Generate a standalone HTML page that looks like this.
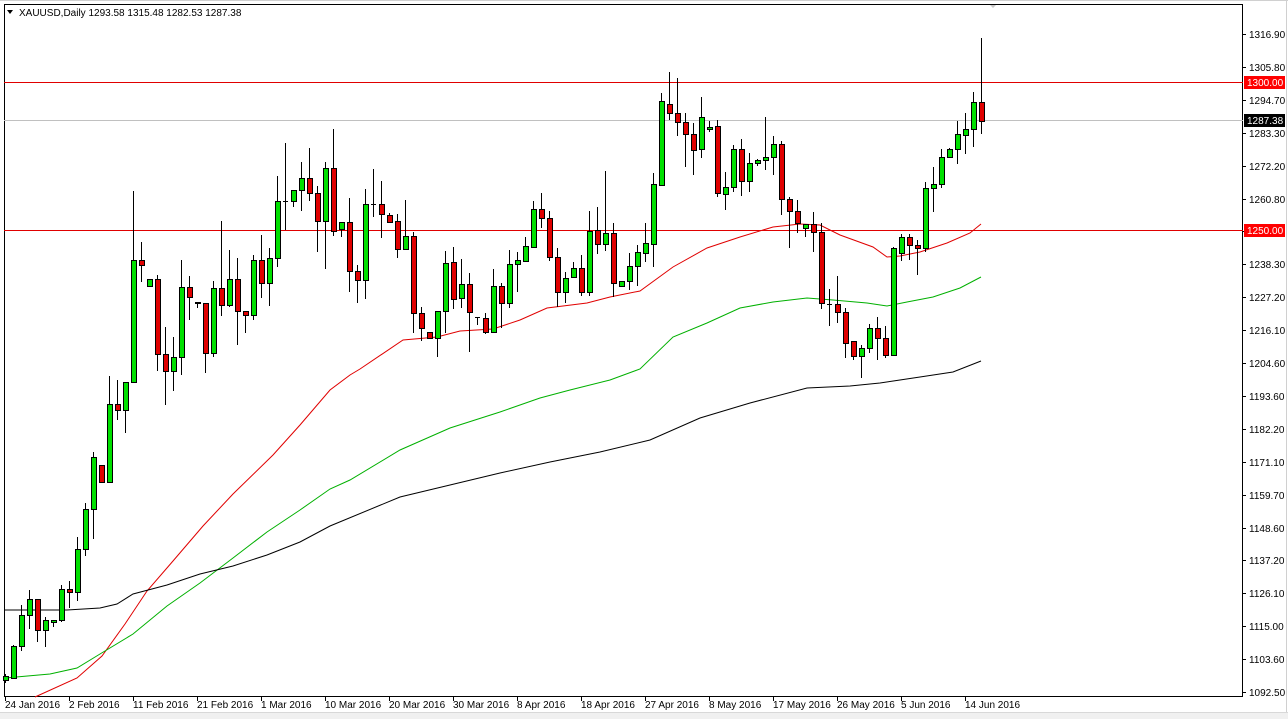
<!DOCTYPE html>
<html><head><meta charset="utf-8"><style>
html,body{margin:0;padding:0;background:#fff;width:1288px;height:719px;overflow:hidden}
svg{display:block}
text{font-family:"Liberation Sans",sans-serif;font-size:10px;fill:#000}
</style></head><body>
<svg id="s" width="1288" height="719" xmlns="http://www.w3.org/2000/svg">
<rect x="0" y="0" width="1288" height="719" fill="#fff"/>
<rect x="0" y="712" width="1288" height="7" fill="#f0f0f0"/>
<line x1="0" y1="712.5" x2="1288" y2="712.5" stroke="#d8d8d8"/>
<line x1="1286.5" y1="0" x2="1286.5" y2="712" stroke="#d0d0d0"/>
<line x1="0" y1="0.5" x2="1288" y2="0.5" stroke="#d0d0d0"/>
<polygon points="989,4 997,4 993,8" fill="#c8c8c8"/>
<rect x="4.5" y="4.5" width="1238" height="692" fill="none" stroke="#000"/>
<line x1="4" y1="82.5" x2="1243" y2="82.5" stroke="#e00000"/>
<line x1="4" y1="230.5" x2="1243" y2="230.5" stroke="#e00000"/>
<line x1="4" y1="120.5" x2="1243" y2="120.5" stroke="#c0c0c0"/>
<g id="ma" fill="none" stroke-width="1">
<polyline stroke="#e00000" points="35,697 77,678 102,656 125,624 147,591 173,561 203,526 233,494 273,455 300,425 330,390 350,375 360,369 403,340 437,337 460,331 493,329 520,320 547,308 587,303 610,297 640,291 673,267 707,248 740,237 773,227 800,224 820,225 840,235 873,247 887,257 900,256 920,252 947,243 970,233 981,224"/>
<polyline stroke="#00b000" points="5,678 50,674 77,668 100,654 133,634 167,606 200,583 233,558 267,532 300,510 330,489 350,480 400,450 450,428 500,412 540,398 570,390 610,380 640,369 673,337 707,323 740,308 773,302 807,298 833,300 867,303 887,306 907,302 933,297 960,288 981,277"/>
<polyline stroke="#000" points="4,610 67,610 100,608 117,604 133,594 167,585 200,574 233,566 267,555 300,542 330,526 400,497 450,485 500,473 550,462 600,452 650,440 700,418 750,403 807,388 850,386 880,383 920,377 953,372 981,361"/>
</g>
<g id="c"></g>
<text x="19" y="16">XAUUSD,Daily  1293.58 1315.48 1282.53 1287.38</text>
<polygon points="7,10 13,10 10,14" fill="#000"/>
<g id="ax"></g>
<rect x="1244" y="76" width="41" height="13" fill="#ff0000"/>
<text x="1247" y="86" style="fill:#fff">1300.00</text>
<rect x="1244" y="114" width="41" height="13" fill="#000"/>
<text x="1247" y="124" style="fill:#fff">1287.38</text>
<rect x="1244" y="224" width="41" height="13" fill="#ff0000"/>
<text x="1247" y="234" style="fill:#fff">1250.00</text>
<g id="dates"></g>
</svg>
<script>
var C=[[5,674,680,676,683],[13,645,678,646,679],[21,605,646,615,651],[29,590,615,599,629],[37,599,599,630,642],[45,617,630,620,647],[53,620,622,620,627],[61,585,620,589,622],[69,581,589,592,608],[77,537,592,549,601],[85,503,549,509,556],[93,452,509,457,539],[101,465,465,482,482],[109,376,482,404,482],[117,380,404,410,420],[125,382,410,382,433],[133,191,382,260,382],[141,242,260,265,282],[149,279,286,279,286],[157,275,279,354,371],[165,327,354,371,405],[173,337,371,357,391],[181,260,357,287,375],[189,276,287,297,320],[197,302,302,303,308],[205,303,303,353,373],[213,281,353,288,357],[221,221,288,305,316],[229,250,305,279,307],[237,258,279,311,345],[245,311,311,315,333],[253,255,315,260,320],[261,235,260,283,298],[269,248,283,258,306],[277,176,258,201,267],[285,143,201,201,230],[293,190,201,190,207],[301,162,190,178,211],[309,148,178,193,201],[317,186,193,221,252],[325,162,221,168,269],[333,129,168,231,236],[341,222,229,222,237],[349,198,222,271,292],[357,265,271,280,303],[365,189,280,204,299],[373,169,204,204,217],[381,181,204,214,238],[389,213,215,222,222],[397,214,221,249,258],[405,200,249,236,249],[413,232,236,313,333],[421,307,313,328,341],[429,332,332,338,338],[437,311,338,311,357],[445,251,311,263,333],[453,247,262,299,309],[461,259,298,284,308],[469,273,284,312,352],[477,317,317,317,325],[485,313,318,332,334],[493,269,332,286,332],[501,283,286,303,328],[509,250,303,264,308],[517,252,264,260,292],[525,237,261,246,261],[533,201,247,209,247],[541,193,209,218,228],[549,211,218,257,261],[557,248,257,292,307],[565,272,292,278,303],[573,262,277,268,277],[581,255,268,292,296],[589,211,292,231,296],[597,207,230,244,254],[605,171,244,233,251],[613,223,233,283,297],[621,281,286,281,286],[629,253,281,266,290],[637,245,266,252,286],[645,223,253,243,262],[653,173,244,184,267],[661,93,185,101,185],[669,72,104,113,120],[677,78,113,122,136],[685,113,122,134,167],[693,123,134,150,175],[701,97,149,117,158],[709,121,129,127,132],[717,120,126,193,197],[725,172,194,187,210],[733,145,187,149,192],[741,139,149,181,196],[749,153,181,163,192],[757,159,163,160,166],[765,117,160,157,170],[773,136,157,144,175],[781,141,144,199,215],[789,197,199,211,248],[797,200,211,223,233],[805,224,228,224,237],[813,212,224,232,252],[821,223,232,303,309],[829,289,304,304,326],[837,276,304,312,323],[845,308,312,343,358],[853,341,341,356,360],[861,345,356,348,378],[869,324,348,328,353],[877,317,328,338,360],[885,326,338,355,358],[893,247,355,248,355],[901,234,253,237,261],[909,234,237,245,260],[917,240,245,248,275],[925,182,248,188,252],[933,167,188,184,212],[941,149,184,157,188],[949,148,157,149,157],[957,121,149,134,164],[965,113,135,129,154],[973,92,129,102,147],[981,38,102,121,134]];
var ns="http://www.w3.org/2000/svg",g=document.getElementById("c");
function el(t,a){var e=document.createElementNS(ns,t);for(var k in a)e.setAttribute(k,a[k]);return e;}
C.forEach(function(c){var x=c[0],h=c[1],o=c[2],cl=c[3],l=c[4];
g.appendChild(el("line",{x1:x+.5,y1:h,x2:x+.5,y2:l,stroke:"#000"}));
var t=Math.min(o,cl),b=Math.max(o,cl);
if(b-t<1){g.appendChild(el("line",{x1:x-2,y1:t+.5,x2:x+3,y2:t+.5,stroke:"#000"}));return;}
g.appendChild(el("rect",{x:x-2+.5,y:t+.5,width:5,height:b-t,fill:(cl<o?"#00e000":"#e00000"),stroke:"#000"}));});
var P=["1316.90","1305.80","1294.70","1283.30","1272.20","1260.80","1249.70","1238.30","1227.20","1216.10","1204.60","1193.60","1182.20","1171.10","1159.70","1148.60","1137.20","1126.10","1115.00","1103.60","1092.50"];
var ax=document.getElementById("ax");
P.forEach(function(p,i){var y=Math.round(34+i*32.9);
ax.appendChild(el("line",{x1:1243,y1:y+.5,x2:1246,y2:y+.5,stroke:"#000"}));
if(i==6)return;var t=el("text",{x:1249,y:y+4});t.textContent=p;ax.appendChild(t);});
var D=["24 Jan 2016","2 Feb 2016","11 Feb 2016","21 Feb 2016","1 Mar 2016","10 Mar 2016","20 Mar 2016","30 Mar 2016","8 Apr 2016","18 Apr 2016","27 Apr 2016","8 May 2016","17 May 2016","26 May 2016","5 Jun 2016","14 Jun 2016"];
var dg=document.getElementById("dates");
D.forEach(function(d,i){var x=5+i*64;
dg.appendChild(el("line",{x1:x+.5,y1:697,x2:x+.5,y2:701,stroke:"#000"}));
var t=el("text",{x:x,y:708});t.textContent=d;dg.appendChild(t);});
</script>
</body></html>
